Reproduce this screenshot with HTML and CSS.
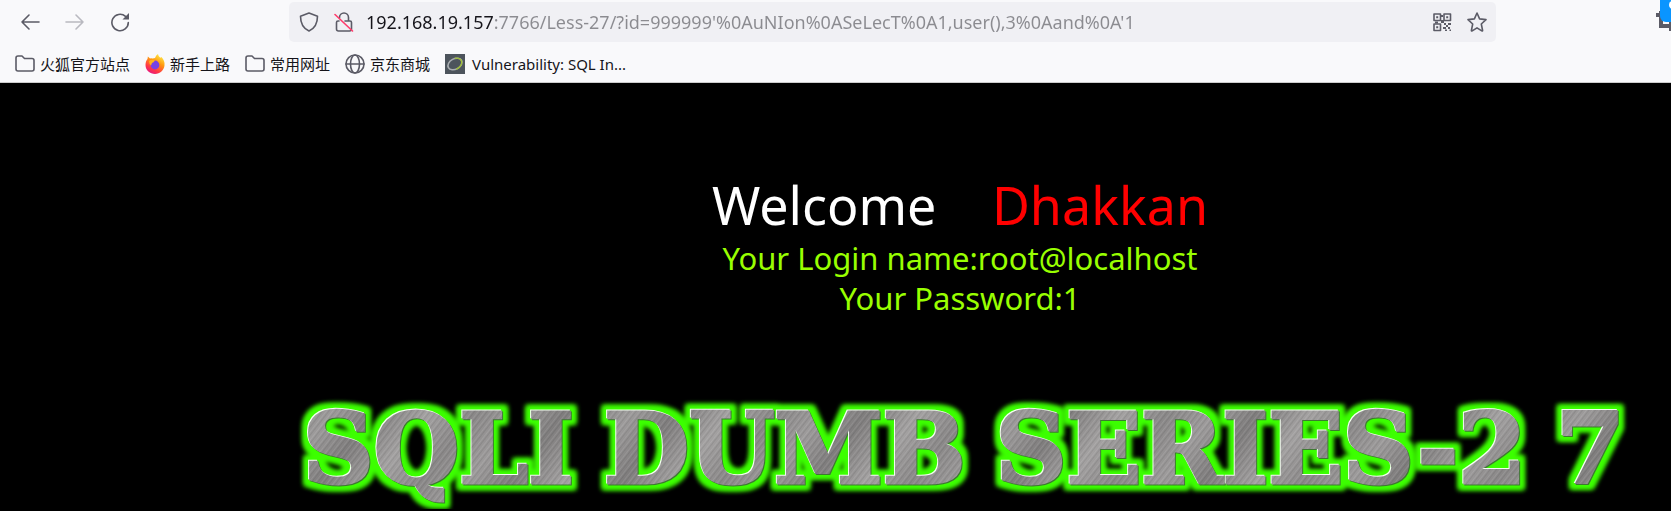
FILE: index.html
```html
<!DOCTYPE html>
<html lang="zh-CN">
<head>
<meta charset="utf-8">
<title>Less-27</title>
<link rel="stylesheet" href="styles.css">
</head>
<body>
<header class="chrome">
  <div class="navbar">
    <div class="nav-buttons">
      <button class="icon-button" aria-label="Back"><svg class="icon" viewBox="0 0 20 20"><path d="M19 10H2M9 3L2 10l7 7"/></svg></button>
      <button class="icon-button" aria-label="Forward" disabled><svg class="icon" viewBox="0 0 20 20"><path d="M1 10h17M11 3l7 7-7 7"/></svg></button>
      <button class="icon-button" aria-label="Reload"><svg class="icon" viewBox="0 0 20 20"><path d="M18.300 10.500A8.200 8.200 0 1 1 15.500 4.300"/><path class="solid" d="M19 1v6.500h-6.500z"/></svg></button>
    </div>
    <form class="urlbar">
      <button type="button" class="icon-button" aria-label="Tracking protection"><svg class="icon" viewBox="0 0 20 20"><path d="M10 1L18.500 4.200C18.500 11 16.500 16 10 19C3.500 16 1.500 11 1.500 4.200Z"/></svg></button>
      <button type="button" class="icon-button" aria-label="Connection is not secure"><svg class="icon" viewBox="0 0 20 20"><path d="M5.500 6V5.500a4.500 4.500 0 0 1 9 0V9M5 9h-1q-1.500 0-1.500 1.500V17q0 2 2 2h11q2 0 2-2v-6.500Q17.500 9 16 9h-5"/><path class="slash" d="M1 2.500L18.500 19"/></svg></button>
      <input class="url" type="text" aria-label="Address" value="192.168.19.157:7766/Less-27/?id=999999'%0AuNIon%0ASeLecT%0A1,user(),3%0Aand%0A'1">
      <button type="button" class="icon-button" aria-label="QR code"><svg class="icon" viewBox="0 0 20 20"><path d="M2 2h6.500v6.500H2zM12 2h6.500v6.500H12zM2 12h6.500v6.500H2z"/><path class="solid" d="M4.200 4.200h2v2h-2zM14.200 4.200h2v2h-2zM4.200 14.200h2v2h-2zM9 3h2v2H9zM9 8h3v3H9zM3 9.500h3v2H3zM12 11h2v2h-2zM16 11h3v2h-3zM14 13h2v2h-2zM11 15h3v2h-3zM16 15h2v2h-2zM13 17.500h2V19h-2zM17.500 17.500H19V19h-1.500z"/></svg></button>
      <button type="button" class="icon-button" aria-label="Bookmark"><svg class="icon" viewBox="0 0 20 20"><path d="M10 1l2.600 5.900 6.400.7-4.700 4.400 1.300 6.500q0 .8-.8.400L10 15.800l-4.800 3.100q-.8.400-.8-.4l1.300-6.500L1 7.600l6.400-.7z"/></svg></button>
    </form>
    <button class="icon-button capture" aria-label="Screenshot"><svg class="capture-icon" viewBox="0 0 20 20"><path d="M5 0v15h15M0 4h15v16"/></svg><span class="badge"><span class="badge-dot"></span></span></button>
  </div>
  <nav class="bookmarks">
    <a href="#" class="bookmark"><svg class="icon" viewBox="0 0 20 20"><path d="M1 4q0-2 2-2h4l2.500 2.500H17q2 0 2 2V15q0 2-2 2H3q-2 0-2-2z"/></svg>火狐官方站点</a>
    <a href="#" class="bookmark"><svg class="icon firefox" viewBox="0 0 20 20">
      <defs><linearGradient id="fire" x1="0.8" y1="0" x2="0.250" y2="1"><stop offset="0" stop-color="#fff44f"/><stop offset="0.400" stop-color="#ff980e"/><stop offset="0.750" stop-color="#ff3647"/><stop offset="1" stop-color="#e31587"/></linearGradient></defs>
      <path fill="url(#fire)" d="M13 0c.3 2 1.200 2.500 2.400 3.700l1-.7C18.500 5 20 8 19.500 11.500 19 16 15 20 10 20S.5 16.500.5 11C.5 8 1.500 6 2.500 5l.4-2.500L5 4.500Q6 4 7.500 4.500L10 4q1-3 3-4z"/>
      <circle cx="10" cy="11" r="4.400" fill="#7542e5"/><path fill="#ffb31a" d="M4 7q3-2 6-.5-1.500 2-3 2.500L6 11.500Q4 10 4 7z"/></svg>新手上路</a>
    <a href="#" class="bookmark"><svg class="icon" viewBox="0 0 20 20"><path d="M1 4q0-2 2-2h4l2.500 2.500H17q2 0 2 2V15q0 2-2 2H3q-2 0-2-2z"/></svg>常用网址</a>
    <a href="#" class="bookmark"><svg class="icon" viewBox="0 0 20 20"><circle cx="10" cy="10" r="9"/><ellipse cx="10" cy="10" rx="4.500" ry="9"/><path d="M1 10h18"/></svg>京东商城</a>
    <a href="#" class="bookmark latin"><svg class="icon dvwa" viewBox="0 0 20 20"><rect width="20" height="20" fill="#4d545c" stroke="none"/><g transform="rotate(-28 10 10)"><ellipse cx="10" cy="10" rx="7.500" ry="5.200" stroke="#a9adb0" stroke-width="1.600"/><path d="M9 15.200q6 .2 8-4Q18 7 13 5" stroke="#9fbd3a" stroke-width="1.400"/></g></svg>Vulnerability: SQL In...</a>
  </nav>
</header>
<main class="page">
  <h1 class="welcome">Welcome <span class="name">Dhakkan</span></h1>
  <p class="result">Your Login name:root@localhost<br>Your Password:1</p>
  <h2 class="banner"><span class="word">SQLI</span><span class="word">DUMB</span><span class="word">SERIES-2</span><span class="word">7</span></h2>
</main>
<svg class="filters" aria-hidden="true">
  <filter id="metal-glow" x="-5%" y="-30%" width="110%" height="160%" color-interpolation-filters="sRGB">
    <feMorphology in="SourceAlpha" operator="dilate" radius="5" result="wide"/>
    <feGaussianBlur in="wide" stdDeviation="2.500" result="soft"/>
    <feFlood flood-color="#3cff00"/><feComposite in2="soft" operator="in" result="glow"/>
    <feOffset in="SourceAlpha" dx="-1" dy="-1" result="up"/>
    <feFlood flood-color="#f4fff0"/><feComposite in2="up" operator="in" result="light"/>
    <feOffset in="SourceAlpha" dx="1" dy="1" result="down"/>
    <feFlood flood-color="#3d7a30"/><feComposite in2="down" operator="in" result="dark"/>
    <feMerge><feMergeNode in="glow"/><feMergeNode in="glow"/><feMergeNode in="dark"/><feMergeNode in="light"/><feMergeNode in="SourceGraphic"/></feMerge>
  </filter>
</svg>
</body>
</html>
```
FILE: styles.css
```css
* { box-sizing: border-box; }
body {
  margin: 0;
  background: #000;
  overflow: hidden;
  font-family: "Noto Sans", "Noto Sans CJK SC", sans-serif;
}
.chrome {
  background: #f9f9fb;
  border-bottom: 1px solid #ccc;
  color: #15141a;
}
.navbar {
  display: flex;
  align-items: flex-end;
  height: 42px;
}
.nav-buttons {
  display: flex;
  align-items: center;
  gap: 25px;
  width: 289px;
  height: 40px;
  padding-left: 20px;
}
.icon-button {
  display: flex;
  padding: 0;
  border: 0;
  background: none;
  color: #5b5b66;
}
.icon-button:disabled { color: #b9b9c0; }
.icon {
  width: 20px;
  height: 20px;
  flex: none;
  fill: none;
  stroke: currentColor;
  stroke-width: 1.6;
  stroke-linejoin: round;
  stroke-linecap: round;
}
.icon .solid { fill: currentColor; stroke: none; }
.icon .slash { stroke: #ff3b6b; }
.urlbar {
  flex: 1;
  display: flex;
  align-items: center;
  gap: 15px;
  height: 40px;
  padding: 0 9px 0 10px;
  border-radius: 5px;
  background: #f0f0f4;
}
.url {
  flex: 1;
  min-width: 0;
  height: 32px;
  padding: 0;
  margin-left: -3px;
  border: 0;
  outline: 0;
  font: 18px "Noto Sans", sans-serif;
  color: transparent;
  background: linear-gradient(to right, #15141a 128px, #8b8b90 128px);
  -webkit-background-clip: text;
  background-clip: text;
}
.capture {
  position: relative;
  width: 175px;
  height: 42px;
  justify-content: flex-end;
  align-items: center;
  overflow: hidden;
}
.capture-icon {
  width: 20px;
  height: 20px;
  margin-right: -5px;
  fill: none;
  stroke: #5b5b66;
  stroke-width: 4;
}
.badge {
  position: absolute;
  top: 0;
  right: -11px;
  width: 22px;
  height: 22px;
  border-radius: 0 0 6px 6px;
  background: #0a95ff;
}
.badge-dot {
  position: absolute;
  top: 1px;
  left: 9px;
  width: 8px;
  height: 8px;
  border-radius: 50%;
  background: #fff;
}
.bookmarks {
  display: flex;
  align-items: center;
  gap: 15px;
  height: 40px;
  padding: 4px 15px 0;
}
.bookmark {
  display: flex;
  align-items: center;
  gap: 5px;
  color: #15141a;
  font: 15px/20px "Noto Sans", "Noto Sans CJK SC", sans-serif;
  text-decoration: none;
}
.bookmark .icon { color: #5b5b66; }
.latin { gap: 7px; }
.bookmark .firefox { stroke: none; }
.page {
  padding: 86px 0 0 249px;
  text-align: center;
}
.welcome {
  margin: 0;
  font-size: 52px;
  line-height: 72px;
  font-weight: 400;
  color: #fff;
}
.name { margin-left: 42px; color: #f00; }
.result {
  margin: -3px 0 0;
  font-size: 31px;
  line-height: 40px;
  color: #9f0;
}
.banner {
  display: flex;
  gap: 30px;
  margin: 71px 0 0 54px;
  font: bold 98px/120px "DejaVu Serif", serif;
  filter: url(#metal-glow);
}
.word {
  color: transparent;
  -webkit-text-stroke: 3px transparent;
  background:
    repeating-linear-gradient(128deg, #fff0 0 1px, #ffffff1a 2px, #00000014 4px, #fff0 5px),
    repeating-linear-gradient(128deg, #8a8888 0, #9d9b9b 37px, #7f7d7d 71px, #a4a2a2 113px, #8a8888 150px);
  -webkit-background-clip: text;
  background-clip: text;
}
.filters {
  position: absolute;
  width: 0;
  height: 0;
}
```
